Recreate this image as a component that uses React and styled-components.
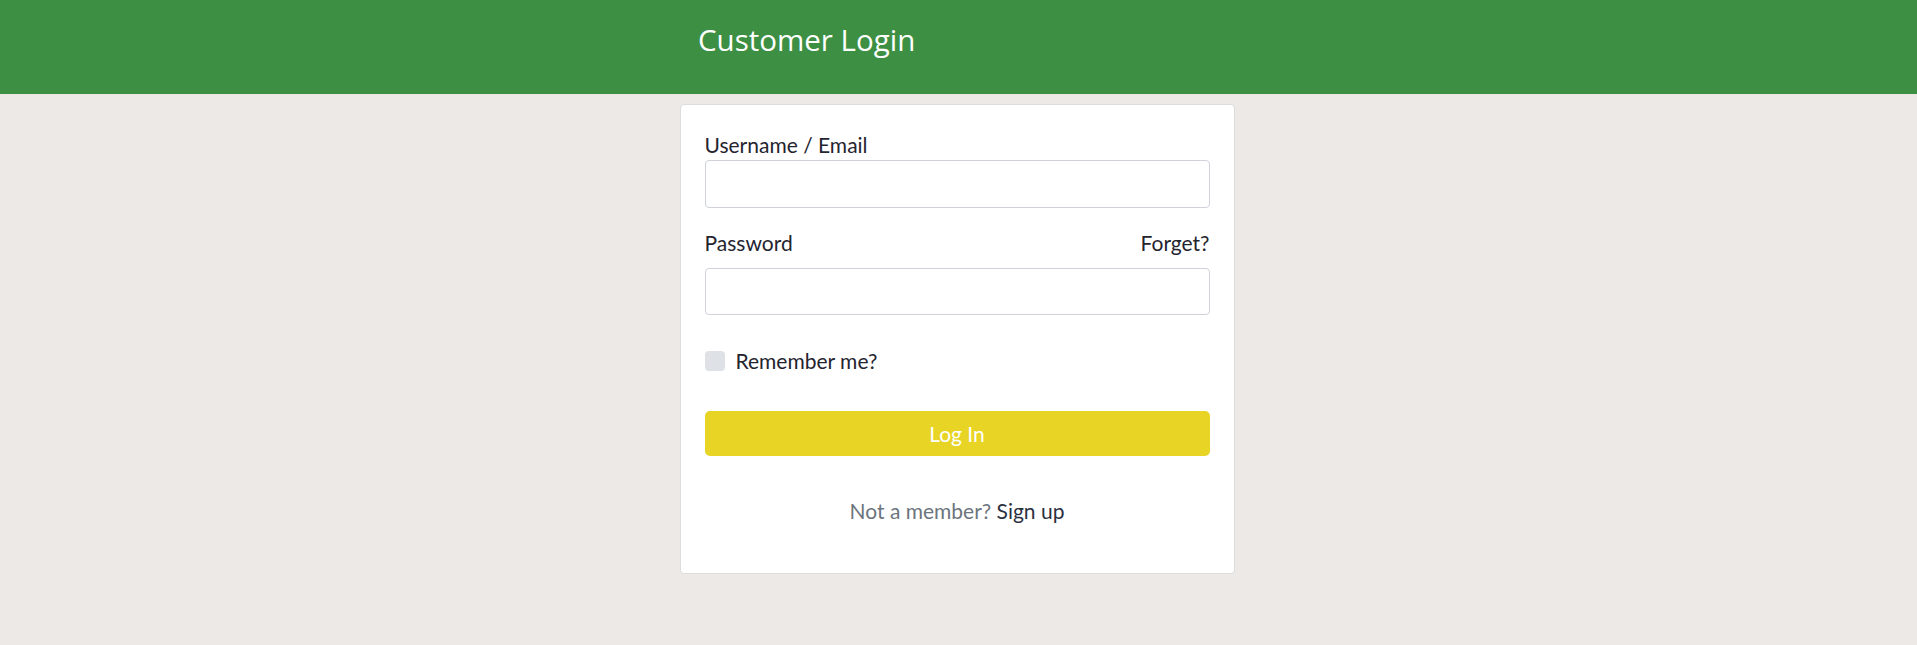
import React from "react";
import styled, { createGlobalStyle } from "styled-components";

const GlobalStyle = createGlobalStyle`
  body {
    margin: 0;
    background: #ece9e7;
    font-family: Lato, "Noto Sans", sans-serif;
    color: #24242f;
  }
  * { box-sizing: border-box; }
`;

const Header = styled.header`
  height: 94px;
  background: #3d8f43;
  display: flex;
  justify-content: center;
`;

const HeaderInner = styled.div`
  width: 554px;
  margin-right: 3px;
  padding: 0 18px 16px;
  display: flex;
  align-items: center;
`;

const Title = styled.h1`
  margin: 0;
  font-family: "Open Sans", "Noto Sans", sans-serif;
  font-weight: 400;
  font-size: 29.5px;
  color: #ffffff;
`;

const Main = styled.main`
  display: flex;
  justify-content: center;
  padding-top: 10px;
`;

const Card = styled.form`
  width: 555px;
  margin-right: 3px;
  background: #ffffff;
  border: 1px solid #dcdcdc;
  border-radius: 4px;
  padding: 28px 24px 50px;
  display: flex;
  flex-direction: column;
`;

const LabelRow = styled.div`
  display: flex;
  justify-content: space-between;
  margin-top: ${p => p.$top || 0}px;
  margin-bottom: ${p => p.$bottom || 3}px;
`;

const Label = styled.label`
  font-size: 21px;
  line-height: 24px;
`;

const LinkText = styled.a`
  font-size: 21px;
  line-height: 24px;
  color: #24242f;
  text-decoration: none;
`;

const Input = styled.input`
  height: ${p => p.$h}px;
  width: 100%;
  border: 1px solid #cfd3d9;
  border-radius: 4px;
  padding: 0 12px;
  font-size: 18px;
  outline: none;
`;

const CheckRow = styled.label`
  display: flex;
  align-items: center;
  gap: 11px;
  margin-top: 34px;
  font-size: 21px;
  line-height: 24px;
`;

const Check = styled.span`
  width: 20px;
  height: 20px;
  border-radius: 4px;
  background: #dee2e6;
`;

const Button = styled.button`
  margin-top: 38px;
  height: 45px;
  border: none;
  border-radius: 5px;
  background: #e8d425;
  color: #ffffff;
  font-family: Lato, "Noto Sans", sans-serif;
  font-size: 21px;
`;

const Footer = styled.p`
  margin: 43px 0 0;
  text-align: center;
  font-size: 21px;
  line-height: 24px;
  color: #6c757d;
`;

const SignUp = styled.a`
  color: #2c3142;
  text-decoration: none;
`;

export default function App() {
  return (
    <>
      <GlobalStyle />
      <Header>
        <HeaderInner>
          <Title>Customer Login</Title>
        </HeaderInner>
      </Header>
      <Main>
        <Card onSubmit={e => e.preventDefault()}>
          <LabelRow>
            <Label>Username / Email</Label>
          </LabelRow>
          <Input $h={48} type="text" />
          <LabelRow $top={23} $bottom={13}>
            <Label>Password</Label>
            <LinkText href="#">Forget?</LinkText>
          </LabelRow>
          <Input $h={47} type="password" />
          <CheckRow>
            <Check />
            Remember me?
          </CheckRow>
          <Button type="submit">Log In</Button>
          <Footer>
            Not a member? <SignUp href="#">Sign up</SignUp>
          </Footer>
        </Card>
      </Main>
    </>
  );
}
